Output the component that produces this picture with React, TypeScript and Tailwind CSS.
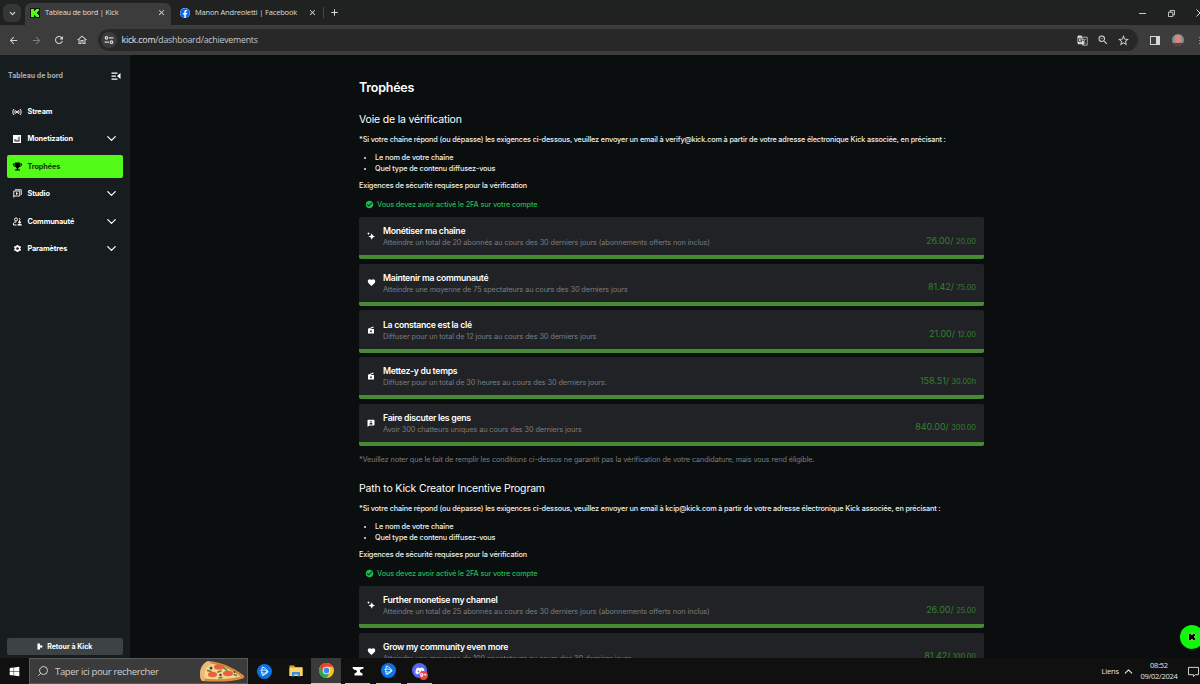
import React from "react";
import {
  MdArrowBack,
  MdArrowForward,
  MdCheckCircle,
  MdClose,
  MdFavorite,
  MdGTranslate,
  MdOutlineHome,
  MdRefresh,
  MdSettings,
  MdStarBorder,
  MdZoomOut,
  MdAdd,
} from "react-icons/md";
import { FaDiscord, FaFacebook, FaTrophy, FaWindows } from "react-icons/fa";
import { ChevronDown, ChevronUp, Search } from "lucide-react";

type IconProps = { className?: string };

/* ---------- icons ---------- */

const KickMark = ({ className }: IconProps) => (
  <svg viewBox="0 0 10 10" className={className} fill="currentColor" shapeRendering="crispEdges">
    <path d="M0 0h4v2h1V1h1V0h4v3H9v1H8v2h1v1h1v3H6V9H5V8H4v2H0z" />
  </svg>
);

const TuneIcon = ({ className }: IconProps) => (
  <svg viewBox="0 0 16 16" className={className} fill="none" stroke="currentColor" strokeWidth="2">
    <circle cx="4" cy="4.5" r="2" />
    <path d="M8 4.5h7M1 11.5h7" />
    <circle cx="12" cy="11.5" r="2" />
  </svg>
);

const CollapseIcon = ({ className }: IconProps) => (
  <svg viewBox="0 0 20 16" className={className} fill="currentColor">
    <path d="M1 1h12v2.4H1zM1 7h9v2.4H1zM1 13h12v2.4H1zM19 2v12l-7-6z" />
  </svg>
);

const StreamIcon = ({ className }: IconProps) => (
  <svg viewBox="0 0 20 16" className={className} fill="none" stroke="currentColor" strokeWidth="2">
    <path d="M4 2C1 5 1 11 4 14M16 2c3 3 3 9 0 12M7 4.5c-1.6 2-1.6 5 0 7M13 4.5c1.6 2 1.6 5 0 7" />
    <circle cx="10" cy="8" r="1.6" fill="currentColor" />
  </svg>
);

const ChartIcon = ({ className }: IconProps) => (
  <svg viewBox="0 0 16 16" className={className}>
    <path d="M0 0h16v16H0z" fill="currentColor" />
    <path d="M3 8h2v5H3zM7 9.5h2V13H7zM11 3.5h2V13h-2zM3 11.5h10V13H3z" fill="#171c1e" />
  </svg>
);

const StudioIcon = ({ className }: IconProps) => (
  <svg viewBox="0 0 18 18" className={className} fill="none" stroke="currentColor" strokeWidth="1.8">
    <path d="M1.5 17V4H13.5v10H1.5M4 1.5h12.5V12" />
    <path d="M6 6.2v5.6L10.5 9z" fill="currentColor" stroke="none" />
  </svg>
);

const CommunityIcon = ({ className }: IconProps) => (
  <svg viewBox="0 0 18 18" className={className}>
    <circle cx="6" cy="5" r="3" fill="none" stroke="currentColor" strokeWidth="2" />
    <path d="M1 16v-2.5C1 11 3 10 6.5 10M1 16h6" fill="none" stroke="currentColor" strokeWidth="2" />
    <path d="M12 2.2a3 3 0 010 5.6" fill="none" stroke="currentColor" strokeWidth="1.8" />
    <circle cx="13.2" cy="10.4" r="2.4" fill="currentColor" />
    <path d="M8.5 17c0-2.6 2-3.6 4.7-3.6s4.6 1 4.6 3.6z" fill="currentColor" />
  </svg>
);

const SparkleIcon = ({ className }: IconProps) => (
  <svg viewBox="0 0 16 16" className={className} fill="currentColor">
    <path d="M9.5 2.5l2 4.500L16 9l-4.500 2-2 4.500-2-4.500L3 9l4.500-2zM3 .5l1 1.7L5.800 3 4 4l-1 1.800L2 4 .2 3 2 2.200z" />
  </svg>
);

const ClapIcon = ({ className }: IconProps) => (
  <svg viewBox="0 0 16 16" className={className}>
    <path d="M2 5.5L12.5 1l1 2L6 6h8v9H2z" fill="currentColor" />
    <path d="M8 8.5v4M6 10.5h4" stroke="#202226" strokeWidth="1.6" />
  </svg>
);

const ChatIcon = ({ className }: IconProps) => (
  <svg viewBox="0 0 16 16" className={className}>
    <path d="M2.5 1.5h11a1.5 1.5 0 011.5 1.5v8.5a1.5 1.5 0 01-1.5 1.5H5L1 15.5V3a1.5 1.5 0 011.5-1.5z" fill="currentColor" />
    <circle cx="8" cy="5.5" r="1.7" fill="#202226" />
    <path d="M4.8 10.8c0-2 1.5-2.8 3.2-2.8s3.2.8 3.2 2.8z" fill="#202226" />
  </svg>
);

const ExitIcon = ({ className }: IconProps) => (
  <svg viewBox="0 0 14 16" className={className} fill="currentColor">
    <path d="M1 1h6v4.5h2V4l4.5 4L9 12v-1.5H7V15H1z" />
  </svg>
);

const ChromeLogo = ({ className }: IconProps) => (
  <svg viewBox="0 0 32 32" className={className}>
    <circle cx="16" cy="16" r="16" fill="#fbc116" />
    <path d="M16 16L2.1 8A16 16 0 0016 32l7-12z" fill="#34a353" />
    <path d="M16 8h13.9a16 16 0 00-27.800 0l7 12z" fill="#ea4335" />
    <circle cx="16" cy="16" r="8" fill="#fff" />
    <circle cx="16" cy="16" r="6.2" fill="#4285f4" />
  </svg>
);

const BattleNetLogo = ({ className }: IconProps) => (
  <svg viewBox="0 0 30 30" className={className}>
    <circle cx="15" cy="15" r="15" fill="#0a74e6" />
    <g fill="none" stroke="#d9f0ff" strokeWidth="2">
      <path d="M11 6c4 1 11 7 11 10 0 2-8 3-14 1" />
      <path d="M11 6c-2 5-2 13 0 17 2 1 6-3 9-9" />
      <path d="M7 13c4-2 12-1 15 2-2 4-6 6-11 6" />
    </g>
  </svg>
);

const FolderLogo = ({ className }: IconProps) => (
  <svg viewBox="0 0 28 24" className={className}>
    <path d="M1 1h9l2 3h15v18H1z" fill="#e8a92c" />
    <path d="M1 6h26v16H1z" fill="#fcd766" />
    <path d="M6 23v-9h16v9h-4v-4h-8v4z" fill="#3f8fd8" />
  </svg>
);

const AnvilLogo = ({ className }: IconProps) => (
  <svg viewBox="0 0 24 20" className={className} fill="#fff">
    <path d="M1 2h22v3c-4 1-6 2-7 4v3l5 3v4H5v-4l5-3c0-3-2-4-4-4C3 7 1 5 1 2z" />
  </svg>
);

const Pizza = ({ className }: IconProps) => (
  <svg viewBox="0 0 92 44" className={className}>
    <path d="M18 2C2 8-2 32 6 42c30 2 58 2 82-5 4-2 3-6-1-8C66 14 44 4 18 2z" fill="#d98b3f" />
    <path d="M22 7C10 14 8 28 11 37c26 3 50 1 73-4C64 20 46 10 22 7z" fill="#f6d58c" />
    <path d="M18 2C2 8-2 32 6 42c5 1 6-2 5-6-1-12 2-22 12-27 3-3-1-6-5-7z" fill="#eab878" />
    <g fill="#e6633f">
      <ellipse cx="40" cy="14" rx="10" ry="5.5" />
      <ellipse cx="27" cy="29" rx="9" ry="5.5" />
      <ellipse cx="58" cy="27" rx="10" ry="5.5" />
    </g>
    <g fill="none" stroke="#54893a" strokeWidth="3" strokeLinecap="round">
      <path d="M17 21l7 2M50 16l6 5M38 24l6-2M70 29l5 2M40 36l6-1" />
    </g>
    <g fill="#5b3552">
      <circle cx="24" cy="16" r="3" />
      <circle cx="43" cy="30" r="2.5" />
      <circle cx="71" cy="24" r="2" />
    </g>
  </svg>
);

/* ---------- browser ---------- */

function TabStrip() {
  return (
    <div className="flex h-[25px] shrink-0 items-end bg-[#1f2221] font-['Open_Sans',sans-serif] text-[7.5px] text-[#dedede]">
      <div className="mb-[3px] ml-[3px] flex h-[18px] w-[18px] items-center justify-center rounded-md bg-[#353737]">
        <ChevronDown className="h-[9px] w-[9px]" strokeWidth={3} />
      </div>
      <div className="ml-1 flex h-[22px] w-[146px] items-center rounded-t-md bg-[#3c3c3c] pb-[3px] pl-[5px]">
        <span className="flex h-[10px] w-[10px] items-center justify-center bg-[#0b1a0a]">
          <KickMark className="h-2 w-2 text-[#53fc18]" />
        </span>
        <span className="ml-[5px] whitespace-nowrap tracking-[-0.27px]">Tableau de bord | Kick</span>
        <MdClose className="ml-auto mr-[5px] h-[9px] w-[9px]" />
      </div>
      <div className="flex h-[22px] w-[152px] items-center pb-[3px] pl-[9px]">
        <span className="flex h-[10px] w-[10px] items-center justify-center rounded-full bg-white">
          <FaFacebook className="h-[10px] w-[10px] text-[#0866ff]" />
        </span>
        <span className="ml-[5px] whitespace-nowrap tracking-[-0.18px]">Manon Andreoletti | Facebook</span>
        <MdClose className="ml-auto mr-[6px] h-[9px] w-[9px]" />
      </div>
      <div className="mb-[7px] h-[11px] w-px bg-[#454746]" />
      <MdAdd className="mb-[7px] ml-[5px] h-[11px] w-[11px]" />
      <div className="mb-[8px] ml-auto flex items-center">
        <div className="h-px w-[7px] bg-[#c8c8c8]" />
        <svg viewBox="0 0 8 8" className="ml-[22px] h-[7px] w-[7px]" fill="none" stroke="#dddddd">
          <path d="M.5 2.5h5v5h-5zM2.5 2.5v-2h5v5h-2" />
        </svg>
        <div className="ml-[21px] w-[4px] overflow-hidden">
          <svg viewBox="0 0 8 8" className="h-2 w-2" fill="none" stroke="#dddddd">
            <path d="M.5.5l7 7M7.5.5l-7 7" />
          </svg>
        </div>
      </div>
    </div>
  );
}

function Toolbar() {
  return (
    <div className="flex h-[30px] shrink-0 items-center bg-[#3c3c3c] font-['Open_Sans',sans-serif] text-[#d6d6d6]">
      <MdArrowBack className="ml-2 h-[11px] w-[11px]" />
      <MdArrowForward className="ml-[12px] h-[11px] w-[11px] text-[#7f7f7f]" />
      <MdRefresh className="ml-[11px] h-[12px] w-[12px]" />
      <MdOutlineHome className="ml-[11px] h-[12px] w-[12px]" />
      <div className="ml-[10px] flex h-[22px] w-[1040px] items-center rounded-full bg-[#282828] pl-[3px]">
        <span className="flex h-4 w-4 items-center justify-center rounded-full bg-[#3c3c3c]">
          <TuneIcon className="h-[10px] w-[10px]" />
        </span>
        <span className="ml-[4.5px] pt-[2px] text-[8.8px] tracking-[-0.23px] text-[#e3e3e3]">
          kick.com<span className="text-[#c7c7c7]">/dashboard/achievements</span>
        </span>
        <MdGTranslate className="ml-auto h-[11px] w-[11px]" />
        <MdZoomOut className="ml-[9px] h-[12px] w-[12px]" />
        <MdStarBorder className="ml-[8px] mr-[8px] h-[13px] w-[13px]" />
      </div>
      <div className="ml-3 h-[9px] w-[10px] border border-r-4 border-[#d6d6d6]" />
      <div className="ml-[12px] h-[12px] w-[12px] overflow-hidden rounded-full bg-[#8b8d94]">
        <div className="mx-auto mt-px h-[8px] w-[6px] rounded-full bg-[#d58a7d]" />
        <div className="h-[3px] bg-[#6a3836]" />
      </div>
      <div className="ml-auto flex flex-col gap-[2px]">
        <i className="h-px w-px bg-[#9a9a9a]" />
        <i className="h-px w-px bg-[#9a9a9a]" />
        <i className="h-px w-px bg-[#9a9a9a]" />
      </div>
    </div>
  );
}

/* ---------- sidebar ---------- */

const navItems = [
  { label: "Stream", icon: <StreamIcon className="h-[8px] w-[10px]" /> },
  { label: "Monetization", icon: <ChartIcon className="h-2 w-2" />, expandable: true },
  { label: "Trophées", icon: <FaTrophy className="h-[9px] w-[9px]" />, active: true },
  { label: "Studio", icon: <StudioIcon className="h-[9px] w-[9px]" />, expandable: true },
  { label: "Communauté", icon: <CommunityIcon className="h-[9px] w-[9px]" />, expandable: true },
  { label: "Paramètres", icon: <MdSettings className="h-[9px] w-[9px]" />, expandable: true },
];

function Sidebar() {
  return (
    <aside className="flex w-[130px] shrink-0 flex-col bg-[#171c1e] pb-[3px] pl-[6.5px] pr-[7px]">
      <div className="flex h-[41px] items-center justify-between pl-[1.5px] pr-[2px]">
        <span className="pt-[2px] text-[7px] font-bold text-[#a0adb8]">Tableau de bord</span>
        <CollapseIcon className="h-2 w-[10px] text-white" />
      </div>
      <nav className="mt-[4px] flex flex-col gap-[4.4px]">
        {navItems.map((item) => (
          <a
            key={item.label}
            className={`flex h-[23px] items-center rounded-[2px] pl-[5px] pr-[4px] text-[7.3px] font-bold tracking-[-0.13px] ${
              item.active ? "bg-[#53fc18] text-[#12350a]" : "text-white"
            }`}
          >
            <span className={`flex w-[11px] justify-center ${item.active ? "text-black" : ""}`}>{item.icon}</span>
            <span className="ml-[5px] pt-[2px]">{item.label}</span>
            {item.expandable && <ChevronDown className="ml-auto h-[15px] w-[15px]" strokeWidth={2} />}
          </a>
        ))}
      </nav>
      <button className="mt-auto flex h-[17px] items-center justify-center gap-[4px] rounded-[2px] bg-[#3d4245] text-[7px] font-bold text-white">
        <ExitIcon className="h-[7px] w-[6px]" />
        <span className="pt-[2px]">Retour à Kick</span>
      </button>
    </aside>
  );
}

/* ---------- achievements ---------- */

interface Achievement {
  title: string;
  description: string;
  icon: React.ReactNode;
  current: string;
  goal: string;
}

const sparkle = <SparkleIcon className="h-2 w-2" />;
const heart = <MdFavorite className="h-[9px] w-[9px]" />;
const clap = <ClapIcon className="h-2 w-2" />;
const chat = <ChatIcon className="h-2 w-2" />;

const verification: Achievement[] = [
  {
    title: "Monétiser ma chaîne",
    description: "Atteindre un total de 20 abonnés au cours des 30 derniers jours (abonnements offerts non inclus)",
    icon: sparkle,
    current: "26.00",
    goal: "20.00",
  },
  {
    title: "Maintenir ma communauté",
    description: "Atteindre une moyenne de 75 spectateurs au cours des 30 derniers jours",
    icon: heart,
    current: "81.42",
    goal: "75.00",
  },
  {
    title: "La constance est la clé",
    description: "Diffuser pour un total de 12 jours au cours des 30 derniers jours",
    icon: clap,
    current: "21.00",
    goal: "12.00",
  },
  {
    title: "Mettez-y du temps",
    description: "Diffuser pour un total de 30 heures au cours des 30 derniers jours.",
    icon: clap,
    current: "158.51",
    goal: "30.00h",
  },
  {
    title: "Faire discuter les gens",
    description: "Avoir 300 chatteurs uniques au cours des 30 derniers jours",
    icon: chat,
    current: "840.00",
    goal: "300.00",
  },
];

const incentive: Achievement[] = [
  {
    title: "Further monetise my channel",
    description: "Atteindre un total de 25 abonnés au cours des 30 derniers jours (abonnements offerts non inclus)",
    icon: sparkle,
    current: "26.00",
    goal: "25.00",
  },
  {
    title: "Grow my community even more",
    description: "Atteindre une moyenne de 100 spectateurs au cours des 30 derniers jours",
    icon: heart,
    current: "81.42",
    goal: "100.00",
  },
];

function AchievementCard({ item }: { item: Achievement }) {
  return (
    <div className="flex h-[42.2px] shrink-0 flex-col overflow-hidden rounded-[2px] bg-[#202226]">
      <div className="flex flex-1 items-center pl-[7.5px] pr-2">
        <span className="flex w-[9px] justify-center text-white">{item.icon}</span>
        <div className="ml-[7.5px] pt-[2px]">
          <p className="text-[8.7px] font-semibold leading-[11px] tracking-[-0.29px] text-white">{item.title}</p>
          <p className="text-[7.3px] leading-[11px] tracking-[-0.096px] text-[#7b7d80]">{item.description}</p>
        </div>
        <p className="ml-auto mt-[9px] text-[9px] leading-[11px] tracking-[-0.04px] text-[#35802c]">
          {item.current}/ <span className="text-[7.4px]">{item.goal}</span>
        </p>
      </div>
      <div className="h-[4px] shrink-0 bg-[#468a33]" />
    </div>
  );
}

interface PathSectionProps {
  title: string;
  email: string;
  items: Achievement[];
  note?: string;
}

function PathSection({ title, email, items, note }: PathSectionProps) {
  return (
    <section className="flex shrink-0 flex-col">
      <h2 className="h-5 pt-px text-[10.5px] leading-5 tracking-[-0.18px] text-white">{title}</h2>
      <p className="mt-[2px] h-[17px] whitespace-nowrap text-[7.3px] font-medium leading-[17px] tracking-[-0.15px] text-[#eeeeee]">
        *Si votre chaîne répond (ou dépasse) les exigences ci-dessous, veuillez envoyer un email à {email} à partir de
        votre adresse électronique Kick associée, en précisant :
      </p>
      <ul className="mt-[5.4px] list-disc pl-4 text-[7.3px] font-medium leading-[10.4px] tracking-[-0.14px] text-[#eeeeee]">
        <li>Le nom de votre chaîne</li>
        <li>Quel type de contenu diffusez-vous</li>
      </ul>
      <p className="mt-[4px] h-4 text-[7.3px] font-medium leading-4 tracking-[-0.157px] text-[#eeeeee]">
        Exigences de sécurité requises pour la vérification
      </p>
      <div className="mt-[4.6px] flex h-3 items-center pl-[6px] text-[7.3px] font-medium tracking-[-0.14px] text-[#1fb954]">
        <MdCheckCircle className="mr-[3px] h-[9px] w-[9px]" />
        <span className="pt-px">Vous devez avoir activé le 2FA sur votre compte</span>
      </div>
      <div className="mt-[6.5px] flex flex-col gap-[4.4px]">
        {items.map((item) => (
          <AchievementCard key={item.title} item={item} />
        ))}
      </div>
      {note && (
        <p className="mt-[5.6px] h-4 pt-px text-[7.3px] leading-4 tracking-[-0.1px] text-[#7b7d80]">{note}</p>
      )}
    </section>
  );
}

/* ---------- windows taskbar ---------- */

function Taskbar() {
  return (
    <div className="flex h-[26px] shrink-0 items-center bg-[#101010] font-['Open_Sans',sans-serif] text-[#e6e6e6]">
      <FaWindows className="ml-[9px] h-[11px] w-[11px] text-white" />
      <div className="ml-[9px] flex h-full w-[219px] items-center border border-[#5a5a5a] bg-[#3b3b3b] pl-[7px] text-[9.5px] text-[#cfcfcf]">
        <Search className="h-3 w-3 -scale-x-100" strokeWidth={2} />
        <span className="ml-[6px] whitespace-nowrap pt-[2px] tracking-[-0.34px]">Taper ici pour rechercher</span>
        <Pizza className="ml-auto mr-[2px] h-[22px] w-[46px]" />
      </div>
      <div className="flex h-full">
        <span className="flex w-[33px] items-center justify-center">
          <BattleNetLogo className="h-[15px] w-[15px]" />
        </span>
        <span className="flex w-[30px] items-center justify-center">
          <FolderLogo className="h-[12px] w-[14px]" />
        </span>
        <span className="flex w-[30px] items-center justify-center border-b border-[#d8c4c0] bg-[#3a3a3a]">
          <ChromeLogo className="h-[15px] w-[15px]" />
        </span>
        <span className="ml-[4px] flex w-[25px] items-center justify-center border-b border-[#d8c4c0]">
          <AnvilLogo className="h-[10px] w-[12px]" />
        </span>
        <span className="ml-[6px] flex w-[25px] items-center justify-center border-b border-[#d8c4c0]">
          <BattleNetLogo className="h-[15px] w-[15px]" />
        </span>
        <span className="relative ml-[6px] flex w-[25px] items-center justify-center border-b border-[#d8c4c0]">
          <span className="flex h-[15px] w-[15px] items-center justify-center rounded-full bg-[#5865f2]">
            <FaDiscord className="h-[10px] w-[10px] text-white" />
          </span>
          <span className="absolute bottom-[3px] right-[4px] flex h-[9px] w-[9px] items-center justify-center rounded-full bg-[#e8434a] text-[6px] font-bold text-white">
            9+
          </span>
        </span>
      </div>
      <div className="ml-auto flex items-center">
        <span className="pt-px text-[7.5px] tracking-[-0.15px]">Liens</span>
        <ChevronUp className="ml-[3px] h-[13px] w-[13px]" strokeWidth={2} />
        <div className="ml-[4px] w-[40px] text-center text-[7.5px] leading-[11px] tracking-[-0.26px]">
          <p>08:52</p>
          <p>09/02/2024</p>
        </div>
        <svg viewBox="0 0 12 12" className="ml-[9px] mr-px h-[11px] w-[11px]" fill="none" stroke="#e6e6e6">
          <path d="M.5 1.5h11v8H8l-2 2v-2H.5z" />
        </svg>
      </div>
    </div>
  );
}

export default function App() {
  return (
    <div className="flex h-[684px] w-[1200px] flex-col overflow-hidden bg-[#0a0e0f] font-['Inter',sans-serif]">
      <TabStrip />
      <Toolbar />
      <div className="relative flex h-[603px] shrink-0 overflow-hidden">
        <Sidebar />
        <main className="flex flex-1 flex-col overflow-hidden pl-[229px] pr-[216px] pt-[22px]">
          <h1 className="h-5 shrink-0 pt-px text-[12.5px] font-semibold leading-5 tracking-[-0.22px] text-white">
            Trophées
          </h1>
          <div className="mt-3 flex flex-col gap-[10.5px]">
            <PathSection
              title="Voie de la vérification"
              email="verify@kick.com"
              items={verification}
              note="*Veuillez noter que le fait de remplir les conditions ci-dessus ne garantit pas la vérification de votre candidature, mais vous rend éligible."
            />
            <PathSection title="Path to Kick Creator Incentive Program" email="kcip@kick.com" items={incentive} />
          </div>
        </main>
        {/* chat bubble */}
        <div className="absolute -right-[4px] bottom-[9.5px] flex h-6 w-6 items-center justify-center rounded-full bg-[#0cf80c]">
          <span className="flex h-[10px] w-[10px] items-center justify-center rounded-full bg-[#4fe02f]">
            <KickMark className="h-[6px] w-[6px] text-black" />
          </span>
        </div>
      </div>
      <Taskbar />
    </div>
  );
}
